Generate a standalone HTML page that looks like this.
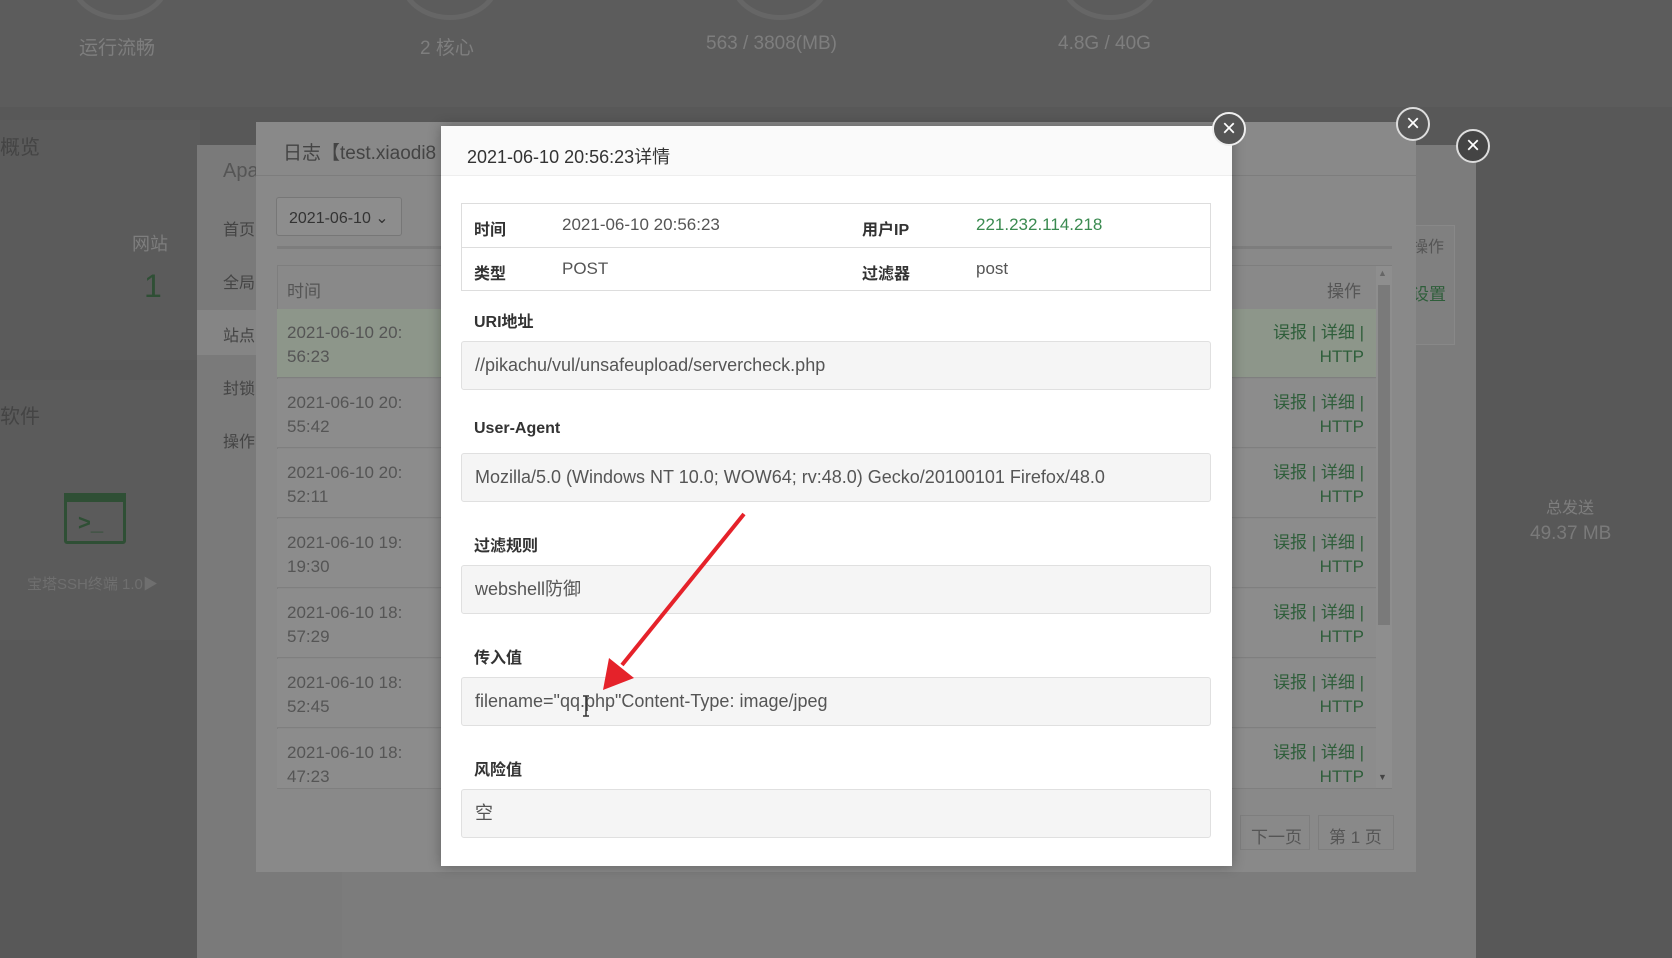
<!DOCTYPE html>
<html><head><meta charset="utf-8"><style>
*{margin:0;padding:0;box-sizing:border-box}
body{width:1672px;height:958px;overflow:hidden;position:relative;background:#585858;font-family:"Liberation Sans","Noto Sans CJK SC",sans-serif;}
.a{position:absolute;white-space:nowrap}
.g{color:#7e7e7e}
.row{position:absolute;left:277px;width:1099px;height:69px;background:#8c8c8c;border-bottom:1px solid #7f7f7f}
.rt{position:absolute;left:10px;top:12px;font-size:17px;line-height:24px;color:#555}
.rl{position:absolute;right:12px;top:12px;font-size:17px;line-height:24px;color:#2e5e3a;text-align:right}
.lab{position:absolute;left:474px;font-size:16px;font-weight:bold;color:#333}
.box{position:absolute;left:461px;width:750px;height:49px;background:#f5f5f5;border:1px solid #e0e0e0;border-radius:3px;font-size:18px;color:#555;padding-left:13px;line-height:47px}
.cl{position:absolute;width:34px;height:34px;border-radius:50%;border:2px solid #ddd;color:#fff;text-align:center;font-size:24px;line-height:29px}
</style></head><body>
<div class="a" style="left:0;top:0;width:1672px;height:107px;background:#5c5c5c"></div>
<div class="a" style="left:70px;top:-60px;width:100px;height:80px;border:5px solid #666;border-radius:50%"></div>
<div class="a" style="left:400px;top:-60px;width:100px;height:80px;border:5px solid #666;border-radius:50%"></div>
<div class="a" style="left:730px;top:-60px;width:100px;height:80px;border:5px solid #666;border-radius:50%"></div>
<div class="a" style="left:1060px;top:-60px;width:100px;height:80px;border:5px solid #666;border-radius:50%"></div>
<div class="a g" style="left:79px;top:33px;font-size:19px">运行流畅</div>
<div class="a g" style="left:420px;top:33px;font-size:19px">2 核心</div>
<div class="a g" style="left:706px;top:33px;font-size:19px">563 / 3808(MB)</div>
<div class="a g" style="left:1058px;top:33px;font-size:19px">4.8G / 40G</div>
<div class="a" style="left:0;top:120px;width:200px;height:240px;background:#5b5b5b"></div>
<div class="a" style="left:0;top:131px;font-size:20px;color:#444">概览</div>
<div class="a g" style="left:132px;top:230px;font-size:18px">网站</div>
<div class="a" style="left:144px;top:268px;font-size:32px;color:#2f4f35">1</div>
<div class="a" style="left:0;top:380px;width:200px;height:260px;background:#5b5b5b"></div>
<div class="a" style="left:0;top:400px;font-size:20px;color:#444">软件</div>
<div class="a" style="left:64px;top:493px;width:62px;height:51px;border:3px solid #2f4f35;border-radius:3px"></div>
<div class="a" style="left:64px;top:493px;width:62px;height:9px;background:#2f4f35"></div>
<div class="a" style="left:78px;top:510px;font-size:22px;color:#2f4f35;font-weight:bold">&gt;_</div>
<div class="a" style="left:27px;top:573px;font-size:15px;color:#6f6f6f">宝塔SSH终端 1.0▶</div>
<div class="a g" style="left:1546px;top:494px;font-size:16px">总发送</div>
<div class="a" style="left:1530px;top:523px;font-size:19px;color:#7a7a7a">49.37 MB</div>
<!-- back modal -->
<div class="a" style="left:197px;top:145px;width:1279px;height:813px;background:#7c7c7c"></div>
<div class="a" style="left:197px;top:145px;width:145px;height:813px;background:#7a7a7a"></div>
<div class="a" style="left:197px;top:310px;width:145px;height:45px;background:#858585"></div>
<div class="a" style="left:223px;top:160px;font-size:20px;color:#555">Apa</div>
<div class="a" style="left:223px;top:216px;font-size:16px;color:#444">首页</div>
<div class="a" style="left:223px;top:269px;font-size:16px;color:#444">全局</div>
<div class="a" style="left:223px;top:322px;font-size:16px;color:#444">站点</div>
<div class="a" style="left:223px;top:375px;font-size:16px;color:#444">封锁</div>
<div class="a" style="left:223px;top:428px;font-size:16px;color:#444">操作</div>
<div class="a" style="left:1400px;top:225px;width:55px;height:120px;border:1px solid #888;background:#808080"></div>
<div class="a" style="left:1412px;top:233px;font-size:16px;color:#555">操作</div>
<div class="a" style="left:1412px;top:280px;font-size:17px;color:#2e5e3a">设置</div>
<div class="cl" style="left:1456px;top:129px;background:#444">×</div>
<!-- log modal -->
<div class="a" style="left:256px;top:122px;width:1160px;height:750px;background:#898989"></div>
<div class="a" style="left:256px;top:175px;width:1160px;height:1px;background:#7d7d7d"></div>
<div class="a" style="left:283px;top:138px;font-size:19px;color:#444">日志【test.xiaodi8</div>
<div class="a" style="left:276px;top:197px;width:126px;height:39px;border:1px solid #777;background:#8d8d8d;border-radius:3px;font-size:16px;color:#333;padding:10px 0 0 12px">2021-06-10 ⌄</div>
<div class="a" style="left:277px;top:246px;width:1115px;height:3px;background:#7d7d7d"></div>
<div class="a" style="left:277px;top:265px;width:1115px;height:524px;border:1px solid #7e7e7e"></div>
<div class="a" style="left:287px;top:277px;font-size:17px;color:#555">时间</div>
<div class="a" style="left:1327px;top:277px;font-size:17px;color:#555">操作</div>
<div class="row" style="top:309px;background:#8d968a"><div class="rt">2021-06-10 20:<br>56:23</div><div class="rl">误报 | 详细 |<br>HTTP</div></div>
<div class="row" style="top:379px"><div class="rt">2021-06-10 20:<br>55:42</div><div class="rl">误报 | 详细 |<br>HTTP</div></div>
<div class="row" style="top:449px"><div class="rt">2021-06-10 20:<br>52:11</div><div class="rl">误报 | 详细 |<br>HTTP</div></div>
<div class="row" style="top:519px"><div class="rt">2021-06-10 19:<br>19:30</div><div class="rl">误报 | 详细 |<br>HTTP</div></div>
<div class="row" style="top:589px"><div class="rt">2021-06-10 18:<br>57:29</div><div class="rl">误报 | 详细 |<br>HTTP</div></div>
<div class="row" style="top:659px"><div class="rt">2021-06-10 18:<br>52:45</div><div class="rl">误报 | 详细 |<br>HTTP</div></div>
<div class="row" style="top:729px;height:60px"><div class="rt">2021-06-10 18:<br>47:23</div><div class="rl">误报 | 详细 |<br>HTTP</div></div>
<div class="a" style="left:1376px;top:266px;width:16px;height:522px;background:#8e8e8e"></div>
<div class="a" style="left:1378px;top:285px;width:12px;height:340px;background:#7a7a7a"></div>
<div class="a" style="left:1378px;top:268px;font-size:9px;color:#666">▲</div>
<div class="a" style="left:1378px;top:772px;font-size:9px;color:#444">▼</div>
<div class="a" style="left:1240px;top:815px;width:70px;height:35px;border:1px solid #7e7e7e;font-size:17px;color:#555;padding:7px 0 0 10px">下一页</div>
<div class="a" style="left:1318px;top:815px;width:76px;height:35px;border:1px solid #7e7e7e;font-size:17px;color:#555;padding:7px 0 0 10px">第 1 页</div>
<div class="cl" style="left:1396px;top:107px;background:#555">×</div>
<!-- detail modal -->
<div class="a" style="left:441px;top:126px;width:791px;height:740px;background:#fff;box-shadow:0 0 12px rgba(0,0,0,.3)"></div>
<div class="a" style="left:441px;top:126px;width:791px;height:50px;background:#fafafa;border-bottom:1px solid #eee"></div>
<div class="a" style="left:467px;top:143px;font-size:18px;color:#333">2021-06-10 20:56:23详情</div>
<div class="cl" style="left:1212px;top:112px;background:#555;border-color:#eee">×</div>
<div class="a" style="left:461px;top:203px;width:750px;height:88px;border:1px solid #ddd"></div>
<div class="a" style="left:461px;top:247px;width:750px;height:1px;background:#ddd"></div>
<div class="a" style="left:474px;top:216px;font-size:16px;font-weight:bold;color:#333">时间</div>
<div class="a" style="left:562px;top:215px;font-size:17px;color:#555">2021-06-10 20:56:23</div>
<div class="a" style="left:862px;top:216px;font-size:16px;font-weight:bold;color:#333">用户IP</div>
<div class="a" style="left:976px;top:215px;font-size:17px;color:#3a8a50">221.232.114.218</div>
<div class="a" style="left:474px;top:260px;font-size:16px;font-weight:bold;color:#333">类型</div>
<div class="a" style="left:562px;top:259px;font-size:17px;color:#555">POST</div>
<div class="a" style="left:862px;top:260px;font-size:16px;font-weight:bold;color:#333">过滤器</div>
<div class="a" style="left:976px;top:259px;font-size:17px;color:#555">post</div>
<div class="lab" style="top:308px">URI地址</div>
<div class="box a" style="top:341px">//pikachu/vul/unsafeupload/servercheck.php</div>
<div class="lab" style="top:420px">User-Agent</div>
<div class="box a" style="top:453px">Mozilla/5.0 (Windows NT 10.0; WOW64; rv:48.0) Gecko/20100101 Firefox/48.0</div>
<div class="lab" style="top:532px">过滤规则</div>
<div class="box a" style="top:565px">webshell防御</div>
<div class="lab" style="top:644px">传入值</div>
<div class="box a" style="top:677px">filename="qq.php"Content-Type: image/jpeg</div>
<div class="lab" style="top:756px">风险值</div>
<div class="box a" style="top:789px">空</div>
<svg class="a" style="left:0;top:0" width="1672" height="958">
<line x1="744" y1="514" x2="622" y2="665" stroke="#e5222a" stroke-width="4"/>
<polygon points="603,690 609,658 634,678" fill="#e5222a"/>
<path d="M583 696h6M586 696v20M583 716h6" stroke="#333" stroke-width="1.5" fill="none"/>
</svg>
</body></html>
